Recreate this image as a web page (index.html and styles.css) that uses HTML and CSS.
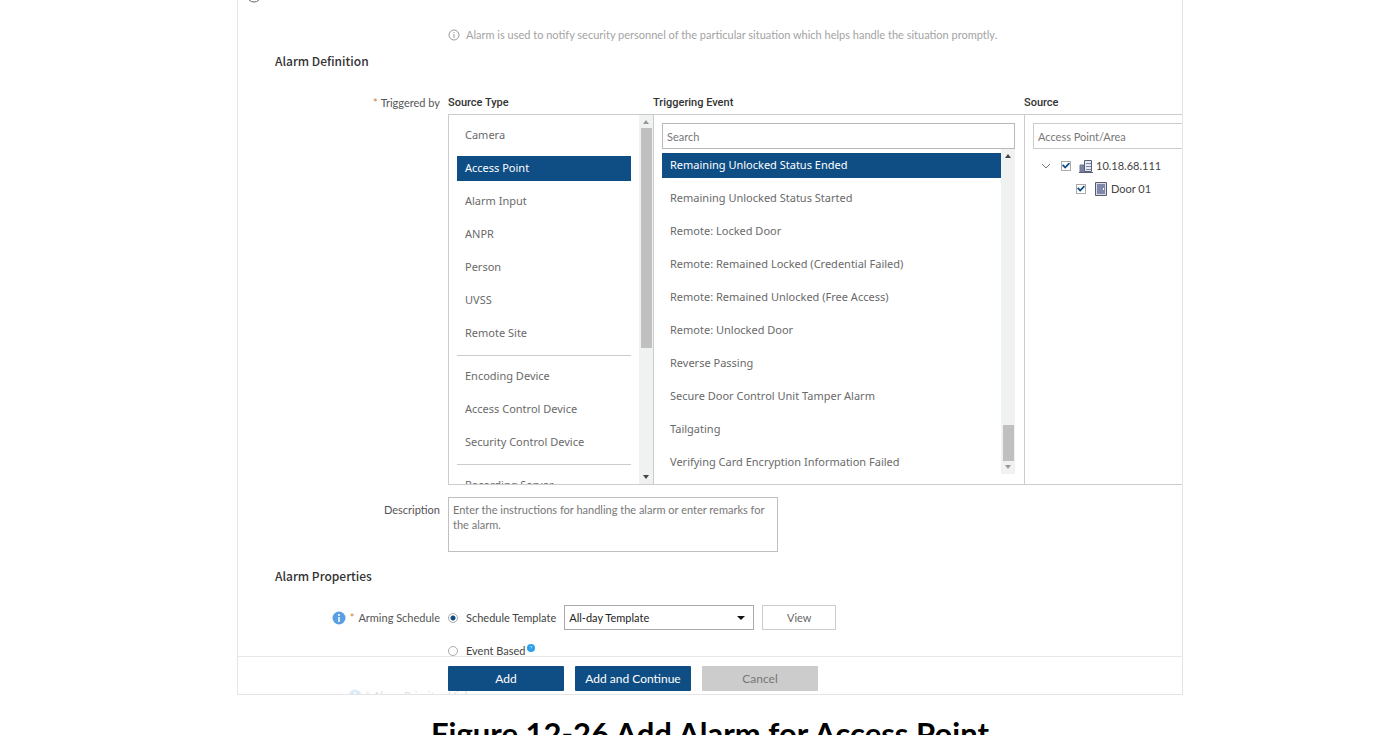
FILE: index.html
```html
<!DOCTYPE html>
<html lang="en">
<head>
    <meta charset="UTF-8">
    <meta name="viewport" content="width=device-width, initial-scale=1.0">
    <title>Add Alarm</title>
    <link rel="stylesheet" href="styles.css">
</head>
<body>
    <figure>
        <div class="app">
            <!-- Header, scrolled almost out of view -->
            <header class="topbar">
                <svg class="back-icon" viewBox="0 0 16 16"><circle cx="8" cy="8" r="7" fill="none" stroke="#666"/></svg>
            </header>

            <main>
                <p class="tip">
                    <svg class="tip-icon" viewBox="0 0 12 12">
                        <circle cx="6" cy="6" r="5" fill="none" stroke="#999"/>
                        <path d="M6 3v1M6 5v4" stroke="#999"/>
                    </svg>
                    Alarm is used to notify security personnel of the particular situation which helps handle the situation promptly.
                </p>

                <h2>Alarm Definition</h2>

                <div class="row">
                    <div class="label"><span class="required">*</span> Triggered by</div>
                    <div class="picker">
                        <h3>Source Type</h3>
                        <h3>Triggering Event</h3>
                        <h3>Source</h3>

                        <!-- Source type -->
                        <div class="column types">
                            <ul class="list">
                                <li>Camera</li>
                                <li class="selected">Access Point</li>
                                <li>Alarm Input</li>
                                <li>ANPR</li>
                                <li>Person</li>
                                <li>UVSS</li>
                                <li>Remote Site</li>
                                <li class="divider"></li>
                                <li>Encoding Device</li>
                                <li>Access Control Device</li>
                                <li>Security Control Device</li>
                                <li class="divider"></li>
                                <li>Recording Server</li>
                            </ul>
                            <div class="scrollbar at-top">
                                <span class="arrow up"></span>
                                <span class="thumb"></span>
                                <span class="arrow down"></span>
                            </div>
                        </div>

                        <!-- Triggering event -->
                        <div class="column events">
                            <input class="search" type="text" placeholder="Search" aria-label="Search event">
                            <div class="event-body">
                                <ul class="list">
                                    <li class="selected">Remaining Unlocked Status Ended</li>
                                    <li>Remaining Unlocked Status Started</li>
                                    <li>Remote: Locked Door</li>
                                    <li>Remote: Remained Locked (Credential Failed)</li>
                                    <li>Remote: Remained Unlocked (Free Access)</li>
                                    <li>Remote: Unlocked Door</li>
                                    <li>Reverse Passing</li>
                                    <li>Secure Door Control Unit Tamper Alarm</li>
                                    <li>Tailgating</li>
                                    <li>Verifying Card Encryption Information Failed</li>
                                </ul>
                                <div class="scrollbar at-bottom">
                                    <span class="arrow up"></span>
                                    <span class="thumb"></span>
                                    <span class="arrow down"></span>
                                </div>
                            </div>
                        </div>

                        <!-- Source tree -->
                        <div class="column sources">
                            <input class="search" type="text" placeholder="Access Point/Area" aria-label="Search source">
                            <div class="tree">
                                <div class="node">
                                    <svg class="chevron" viewBox="0 0 10 10"><path d="M1 3l4 4 4-4" fill="none" stroke="#777"/></svg>
                                    <input type="checkbox" id="site" checked>
                                    <label for="site">
                                        <svg class="node-icon" viewBox="0 0 14 14">
                                            <path d="M1 6h4v7H1z" fill="#7d86a5" stroke="#6b7390"/>
                                            <path d="M5.500 1.500h7v11h-7z" fill="#e6e9f2" stroke="#5b6178"/>
                                            <path d="M7 4.500h5M7 7.500h5M7 10.500h5" stroke="#7d86a5"/>
                                            <path d="M0 13.500h14" stroke="#5b6178"/>
                                        </svg>
                                        10.18.68.111
                                    </label>
                                </div>
                                <div class="node child">
                                    <input type="checkbox" id="door" checked>
                                    <label for="door">
                                        <svg class="node-icon" viewBox="0 0 14 14">
                                            <path d="M1.500 .5h11v13h-11z" fill="#d9dce6" stroke="#555a6c"/>
                                            <path d="M3 2h8v10h-8z" fill="#7d88ab"/>
                                            <path d="M9 6h1v2h-1z" fill="#fff"/>
                                        </svg>
                                        Door 01
                                    </label>
                                </div>
                            </div>
                        </div>
                    </div>
                </div>

                <div class="row description">
                    <label class="label" for="description">Description</label>
                    <textarea id="description" placeholder="Enter the instructions for handling the alarm or enter remarks for the alarm."></textarea>
                </div>

                <h2>Alarm Properties</h2>

                <div class="row schedule">
                    <div class="label">
                        <svg class="info-icon" viewBox="0 0 14 14">
                            <circle cx="7" cy="7" r="6.500" fill="#5b9fe3"/>
                            <path d="M7 3v2M7 6v5" stroke="#fff" stroke-width="1.500"/>
                        </svg>
                        <span class="required">*</span> Arming Schedule
                    </div>
                    <div class="options">
                        <div class="option">
                            <input type="radio" name="schedule" id="template" checked>
                            <label for="template">Schedule Template</label>
                            <div class="select">
                                <select aria-label="Schedule template">
                                    <option>All-day Template</option>
                                </select>
                            </div>
                            <button class="view">View</button>
                        </div>
                        <div class="option">
                            <input type="radio" name="schedule" id="event">
                            <label for="event">Event Based</label>
                            <svg class="hint-icon" viewBox="0 0 8 8">
                                <circle cx="4" cy="4" r="4" fill="#2f9fe8"/>
                                <path d="M3 3q1-1.500 2 0L4 4.500" fill="none" stroke="#8fd0ff"/>
                            </svg>
                        </div>
                    </div>
                </div>

                <!-- Runs on behind the footer -->
                <div class="row priority">
                    <div class="label">
                        <svg class="info-icon" viewBox="0 0 14 14">
                            <circle cx="7" cy="7" r="6.500" fill="#5b9fe3"/>
                            <path d="M7 3v2M7 6v5" stroke="#fff" stroke-width="1.500"/>
                        </svg>
                        <span class="required">*</span> Alarm Priority
                    </div>
                    <div class="value">High</div>
                </div>
            </main>

            <footer class="actions">
                <button class="primary">Add</button>
                <button class="primary">Add and Continue</button>
                <button class="cancel">Cancel</button>
            </footer>
        </div>
        <figcaption>Figure 12-26 Add Alarm for Access Point</figcaption>
    </figure>
</body>
</html>
```
FILE: styles.css
```css
* {
    box-sizing: border-box;
}

body {
    margin: 0;
    height: 100vh;
    overflow: hidden;
    background-color: #fff;
    font-family: Lato, "Noto Sans", sans-serif;
    font-size: 11px;
    line-height: 15px;
    color: #444;
}

figure {
    margin: 0 217px 0 237px;
}

figcaption {
    margin-top: 20px;
    font-family: Lato, sans-serif;
    font-size: 31px;
    font-weight: bold;
    line-height: 36px;
    text-align: center;
    color: #000;
}

input,
textarea,
select,
button {
    font: inherit;
    color: inherit;
}

h2,
h3,
p,
ul {
    margin: 0;
    padding: 0;
}

/* App window */
.app {
    position: relative;
    overflow: hidden;
    border: 1px solid #e4e4e4;
    border-top: none;
}

.topbar {
    display: flex;
    align-items: flex-end;
    height: 3px;
    padding-left: 8px;
    overflow: hidden;
}

.back-icon {
    flex: none;
    width: 16px;
    height: 16px;
}

.tip {
    display: flex;
    align-items: center;
    gap: 6px;
    margin: 24px 0 0 210px;
    color: #a3a3a3;
    white-space: nowrap;
}

.tip-icon {
    width: 12px;
    height: 12px;
}

h2 {
    margin: 10px 0 0 37px;
    font-family: "Noto Sans CJK SC", "Noto Sans", sans-serif;
    font-size: 12px;
    font-weight: 500;
    line-height: 18px;
    color: #333;
}

.row {
    display: flex;
    gap: 8px;
}

.label {
    flex: none;
    display: flex;
    align-items: center;
    justify-content: flex-end;
    gap: 3px;
    width: 202px;
    height: 25px;
    color: #555;
}

.required {
    color: #d08040;
}

/* Source picker */
h2 + .row {
    margin-top: 20px;
}

.picker {
    flex: 1;
    display: grid;
    grid-template-columns: 205px 371px 1fr;
    grid-template-rows: 24px 371px;
    min-width: 0;
}

h3 {
    font-family: Roboto, "Noto Sans", sans-serif;
    font-size: 11px;
    font-weight: 500;
    line-height: 25px;
    color: #333;
}

.column {
    min-width: 0;
    border: 1px solid #ccc;
    border-right: none;
    overflow: hidden;
}

.types {
    display: flex;
    padding-left: 8px;
}

.types .list {
    padding-top: 8px;
}

.list {
    flex: 1;
    display: flex;
    flex-direction: column;
    gap: 8px;
    font-family: "Noto Sans", "Open Sans", sans-serif;
    list-style: none;
}

.list li {
    flex: none;
    height: 25px;
    padding-left: 8px;
    line-height: 24px;
    color: #6a6a6a;
}

.list .selected {
    background-color: #0f4e84;
    color: #fff;
}

.list .divider {
    height: 2px;
    border-bottom: 1px solid #ccc;
}

.scrollbar {
    flex: none;
    display: flex;
    flex-direction: column;
    align-items: center;
    width: 14px;
    padding: 5px 0;
    background-color: #f0f2f2;
}

.types .scrollbar {
    margin-left: 8px;
}

.thumb {
    width: 11px;
    background-color: #c0c0c0;
}

.at-top .thumb {
    height: 220px;
    margin: 4px 0 auto;
}

.at-bottom .thumb {
    height: 36px;
    margin: auto 0 4px;
}

.arrow {
    border: 3px solid transparent;
}

.arrow.up {
    border-top: none;
    border-bottom: 4px solid #444;
}

.arrow.down {
    border-bottom: none;
    border-top: 4px solid #444;
}

.at-top .up {
    border-bottom-color: #999;
}

.at-bottom .down {
    border-top-color: #999;
}

.search {
    display: block;
    width: 100%;
    height: 26px;
    padding: 0 4px;
    border: 1px solid #b8b8b8;
    border-radius: 0;
    background-color: #fff;
}

.search::placeholder,
textarea::placeholder {
    color: #777;
    opacity: 1;
}

.events {
    padding: 8px 9px 0 8px;
}

.event-body {
    display: flex;
    height: 325px;
}

.event-body .list {
    padding-top: 4px;
}

.sources {
    padding: 8px 0 0 8px;
}

.sources .search {
    border-right: none;
    border-color: #ccc;
}

.tree {
    padding: 5px 0 0 8px;
}

.node {
    display: flex;
    align-items: center;
    height: 23px;
}

.node.child {
    padding-left: 35px;
}

.node label {
    display: flex;
    align-items: center;
    gap: 3px;
    white-space: nowrap;
}

.chevron {
    width: 10px;
    height: 10px;
    margin-right: 10px;
}

.node-icon {
    width: 14px;
    height: 14px;
}

input[type="checkbox"] {
    display: grid;
    place-items: center;
    width: 10px;
    height: 10px;
    margin: 0 8px 0 0;
    border: 1px solid #aaa;
    background-color: #fff;
    appearance: none;
}

input[type="checkbox"]:checked::before {
    content: "";
    width: 8px;
    height: 8px;
    background-color: #0f4e84;
    clip-path: polygon(0 50%, 15% 35%, 40% 60%, 85% 12%, 100% 28%, 40% 90%);
}

/* Description */
.description {
    margin-top: 12px;
}

textarea {
    width: 330px;
    height: 55px;
    padding: 4px;
    border: 1px solid #c0c0c0;
    resize: none;
}

.description + h2 {
    margin-top: 15px;
}

/* Arming schedule */
.options {
    display: flex;
    flex-direction: column;
    gap: 8px;
}

.option {
    display: flex;
    align-items: center;
    height: 25px;
}

.schedule .label {
    gap: 4px;
}

input[type="radio"] {
    width: 10px;
    height: 10px;
    margin: 0 8px 0 0;
    border: 1px solid #aaa;
    border-radius: 50%;
    background-color: #fff;
    appearance: none;
}

input[type="radio"]:checked {
    background-image: radial-gradient(circle, #0f4e84 2px, transparent 3px);
}

.select {
    position: relative;
    width: 190px;
    margin: 0 8px;
}

.select::after {
    content: "";
    position: absolute;
    top: 11px;
    right: 9px;
    border: 4px solid transparent;
    border-top-color: #111;
    border-bottom: none;
    pointer-events: none;
}

select {
    display: block;
    width: 100%;
    height: 25px;
    padding: 0 4px;
    border: 1px solid #aaa;
    border-radius: 0;
    background-color: #fff;
    color: #222;
    appearance: none;
}

.view {
    width: 74px;
    height: 25px;
    padding: 0;
    border: 1px solid #ccc;
    background-color: #fff;
    color: #666;
}

.info-icon {
    width: 14px;
    height: 14px;
}

.hint-icon {
    align-self: flex-start;
    width: 8px;
    height: 8px;
    margin: 6px 0 0 2px;
}

.priority {
    height: 11px;
    margin-top: 20px;
    overflow: hidden;
}

.priority .value {
    line-height: 25px;
}

/* Footer buttons */
.actions {
    position: absolute;
    right: 0;
    bottom: 0;
    left: 0;
    display: flex;
    gap: 11px;
    height: 38px;
    padding: 9px 0 0 210px;
    border-top: 1px solid #e8e8e8;
    background-color: rgba(255, 255, 255, 0.8);
}

.actions button {
    width: 116px;
    height: 25px;
    padding: 0;
    border: none;
    border-radius: 1px;
    font-size: 12px;
}

.primary {
    background-color: #0f4e84;
    color: #fff;
}

.cancel {
    background-color: #ccc;
    color: #777;
}
```
